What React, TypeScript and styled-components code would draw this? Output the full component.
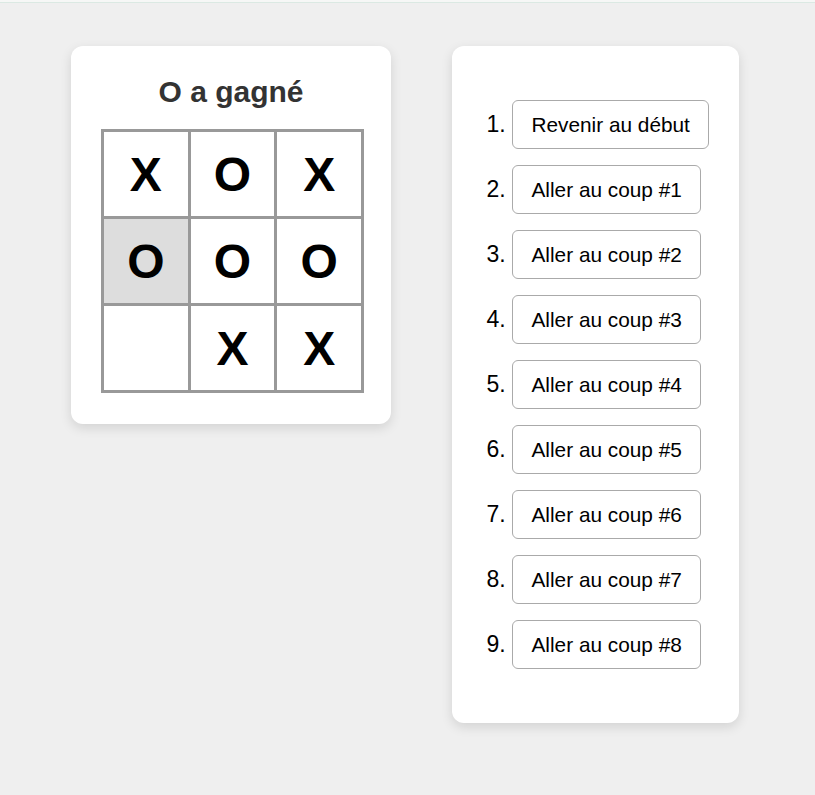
import React from "react";
import styled, { createGlobalStyle } from "styled-components";

const GlobalStyle = createGlobalStyle`
  html, body {
    margin: 0;
    padding: 0;
    background: #efefef;
    font-family: "Liberation Sans", Arial, sans-serif;
  }
  * { box-sizing: border-box; }
`;

const TopRule = styled.div`
  height: 3px;
  background: #f6f7f6;
  border-bottom: 1px solid #dbe9e3;
`;

const Page = styled.div`
  display: flex;
  align-items: flex-start;
  gap: 61px;
  padding: 43px 0 0 71px;
  min-height: 792px;
`;

const Card = styled.div`
  background: #ffffff;
  border-radius: 12px;
  box-shadow: 0 4px 12px rgba(0, 0, 0, 0.12);
`;

const GameCard = styled(Card)`
  width: 320px;
  padding: 29px 0 31px 30px;
`;

const Status = styled.h2`
  margin: 0 0 20px;
  width: 260px;
  text-align: center;
  font-size: 30px;
  font-weight: 700;
  color: #333333;
  line-height: 34px;
`;

const Board = styled.div`
  display: grid;
  grid-template-columns: repeat(3, 1fr);
  grid-template-rows: repeat(3, 1fr);
  gap: 3px;
  padding: 3px;
  width: 263px;
  height: 264px;
  background: #999999;
`;

const Square = styled.div<{ $highlight?: boolean }>`
  display: flex;
  align-items: center;
  justify-content: center;
  background: ${(p) => (p.$highlight ? "#dddddd" : "#ffffff")};
  font-size: 48px;
  font-weight: 700;
  color: #000000;
`;

const HistoryCard = styled(Card)`
  padding: 54px 30px;
`;

const MoveList = styled.ol`
  margin: 0;
  padding: 0 0 0 30px;
  font-size: 23px;
  color: #000000;
`;

const MoveItem = styled.li<{ $last?: boolean }>`
  height: 49px;
  margin-bottom: ${(p) => (p.$last ? "0" : "16px")};
`;

const MoveButton = styled.button`
  font-family: "Liberation Sans", Arial, sans-serif;
  font-size: 20.8px;
  height: 49px;
  padding: 0 18.5px;
  vertical-align: baseline;
  background: #ffffff;
  color: #000000;
  border: 1px solid #aaaaaa;
  border-radius: 6px;
  cursor: pointer;
`;

const squares = ["X", "O", "X", "O", "O", "O", "", "X", "X"];
const moves = [
  "Revenir au début",
  "Aller au coup #1",
  "Aller au coup #2",
  "Aller au coup #3",
  "Aller au coup #4",
  "Aller au coup #5",
  "Aller au coup #6",
  "Aller au coup #7",
  "Aller au coup #8",
];

export default function App() {
  return (
    <>
      <GlobalStyle />
      <TopRule />
      <Page>
        <GameCard>
          <Status>O a gagné</Status>
          <Board>
            {squares.map((s, i) => (
              <Square key={i} $highlight={i === 3}>
                {s}
              </Square>
            ))}
          </Board>
        </GameCard>
        <HistoryCard>
          <MoveList>
            {moves.map((m, i) => (
              <MoveItem key={i} $last={i === moves.length - 1}>
                <MoveButton>{m}</MoveButton>
              </MoveItem>
            ))}
          </MoveList>
        </HistoryCard>
      </Page>
    </>
  );
}
